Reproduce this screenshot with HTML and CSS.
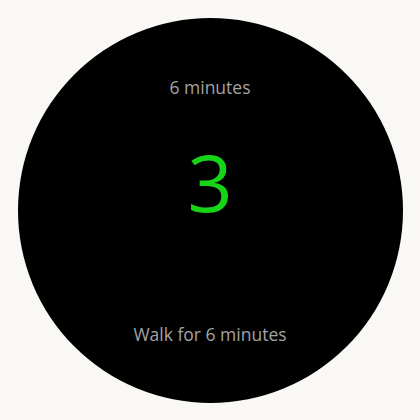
FILE: index.html
```html
<!DOCTYPE html>
<html>
<head>
<meta charset="utf-8">
<link rel="stylesheet" href="styles.css">
</head>
<body>
<div class="screen">
  <div class="watch">
    <div class="total">6 minutes</div>
    <div class="count">3</div>
    <div class="label">Walk for 6 minutes</div>
  </div>
</div>
</body>
</html>
```
FILE: styles.css
```css
html, body {
  margin: 0;
  padding: 0;
  background: #f9f8f5;
}
.screen {
  width: 420px;
  height: 420px;
  display: flex;
  align-items: center;
  justify-content: center;
}
.watch {
  width: 385px;
  height: 385px;
  border-radius: 50%;
  background: #000;
  display: flex;
  flex-direction: column;
  align-items: center;
  box-sizing: border-box;
  padding-top: 59px;
  font-family: "Open Sans", "Noto Sans", sans-serif;
}
.total, .label {
  font-size: 17.5px;
  line-height: 20px;
  color: #a3a3a3;
}
.count {
  margin-top: 45px;
  font-size: 79px;
  line-height: 80px;
  font-weight: 400;
  color: #17d417;
}
.label {
  margin-top: 102px;
}
```
